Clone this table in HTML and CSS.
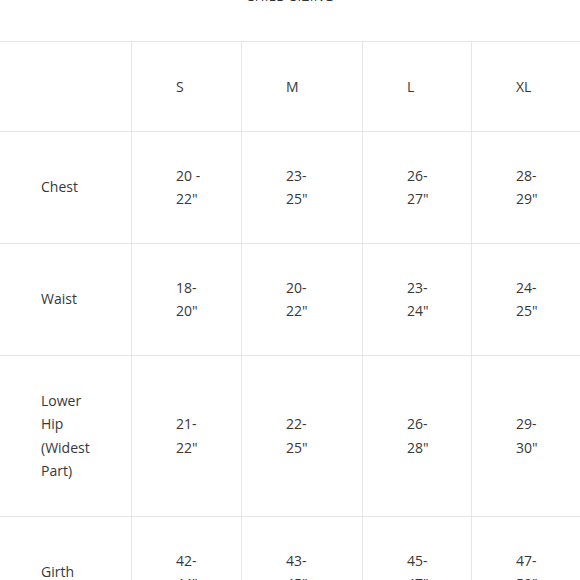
FILE: index.html
```html
<!DOCTYPE html>
<html>
<head>
<meta charset="utf-8">
<link rel="stylesheet" href="styles.css">
</head>
<body>
<div class="page">
  <h2 class="title">CHILD SIZING</h2>
  <table class="sizes">
    <colgroup>
      <col class="c1"><col class="c2"><col class="c3"><col class="c4"><col class="c5">
    </colgroup>
    <tr class="head"><td></td><td>S</td><td>M</td><td>L</td><td>XL</td></tr>
    <tr><td>Chest</td><td>20 -<br>22"</td><td>23-<br>25"</td><td>26-<br>27"</td><td>28-<br>29"</td></tr>
    <tr><td>Waist</td><td>18-<br>20"</td><td>20-<br>22"</td><td>23-<br>24"</td><td>24-<br>25"</td></tr>
    <tr class="tall"><td>Lower<br>Hip<br>(Widest<br>Part)</td><td>21-<br>22"</td><td>22-<br>25"</td><td>26-<br>28"</td><td>29-<br>30"</td></tr>
    <tr><td>Girth</td><td>42-<br>44"</td><td>43-<br>45"</td><td>45-<br>47"</td><td>47-<br>50"</td></tr>
  </table>
</div>
</body>
</html>
```
FILE: styles.css
```css
html, body {
  margin: 0;
  padding: 0;
  background: #fff;
  overflow: hidden;
}
.page {
  width: 580px;
  height: 580px;
  overflow: hidden;
  font-family: "Open Sans", "Noto Sans", sans-serif;
  color: #383838;
}
.title {
  margin: -12px 0 0 0;
  text-align: center;
  font-size: 13px;
  font-weight: 400;
  line-height: 16px;
  letter-spacing: 0.5px;
  color: #333;
  height: 53px;
}
.sizes {
  border-collapse: collapse;
  table-layout: fixed;
  width: 594px;
  margin-left: -3px;
  font-size: 14px;
  line-height: 23.5px;
}
.c1 { width: 134px; }
.c2 { width: 110px; }
.c3 { width: 121px; }
.c4 { width: 109px; }
.c5 { width: 120px; }
.sizes td {
  border: 1px solid #e6e6e6;
  padding: 32px 0 32px 44px;
  vertical-align: middle;
  text-align: left;
}
.sizes .head td {
  padding-top: 32.5px;
  padding-bottom: 32.5px;
}
.sizes .tall td {
  padding-top: 33px;
  padding-bottom: 33px;
}
.sizes td:first-child {
  padding-left: 43px;
}
```
